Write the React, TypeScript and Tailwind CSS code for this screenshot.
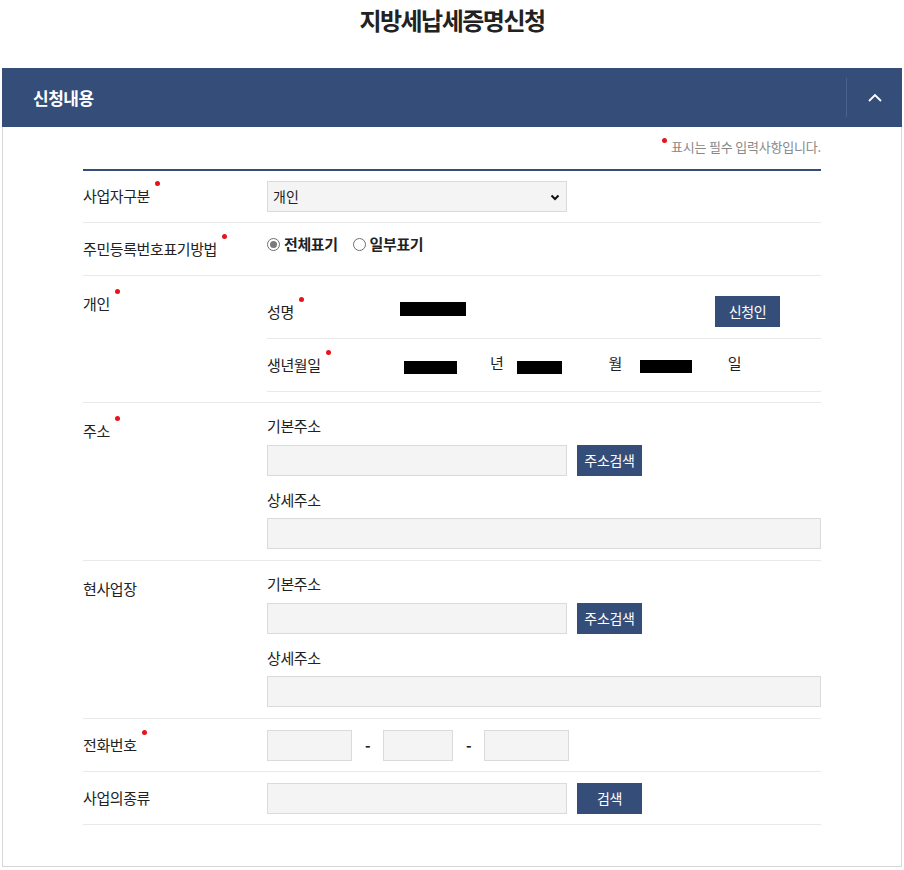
import React from 'react';

const NAVY = 'bg-[#344d79]';

function Req({ children }: { children: React.ReactNode }) {
  return (
    <span className="relative inline-block">
      {children}
      <span className="absolute -right-[10px] -top-[4px] w-[5px] h-[5px] rounded-full bg-[#e8141c]"></span>
    </span>
  );
}

function Box({ className = '' }: { className?: string }) {
  return <div className={`h-[31px] bg-[#f4f4f4] border border-[#dadada] ${className}`}></div>;
}

function NavyButton({ label, className = '' }: { label: string; className?: string }) {
  return (
    <button className={`h-[31px] w-[65px] ${NAVY} text-white text-[14px] tracking-[-0.3px] ${className}`}>
      {label}
    </button>
  );
}

function Radio({ label, checked }: { label: string; checked?: boolean }) {
  return (
    <label className="flex items-center gap-[4px]">
      <span className="w-[13px] h-[13px] rounded-full border border-[#6f6f6f] bg-white flex items-center justify-center">
        {checked && <span className="w-[7px] h-[7px] rounded-full bg-[#7a7a7a]"></span>}
      </span>
      <span className="font-semibold">{label}</span>
    </label>
  );
}

function AddressBlock() {
  return (
    <div className="flex-1 flex flex-col pt-[14px] pb-[11px]">
      <div className="leading-[18px]">기본주소</div>
      <div className="flex gap-[10px] mt-[10px]">
        <Box className="w-[300px]" />
        <NavyButton label="주소검색" />
      </div>
      <div className="leading-[18px] mt-[15px]">상세주소</div>
      <Box className="w-full mt-[9px]" />
    </div>
  );
}

export default function App() {
  return (
    <div className="min-h-[870px] bg-white text-[#222] font-['Noto_Sans_CJK_KR','Noto_Sans',sans-serif]">
      {/* Title */}
      <h1 className="pt-[4px] h-[68px] text-center text-[24px] leading-[32px] font-bold tracking-[-1.5px]">
        지방세납세증명신청
      </h1>

      <div className="mx-[2px] border-x border-b border-[#d6d6d6]">
        {/* Section header */}
        <div className={`-mx-px h-[59px] ${NAVY} flex items-center`}>
          <h2 className="flex-1 pl-[31px] text-white text-[17px] font-bold tracking-[-0.5px]">신청내용</h2>
          <div className="h-[39px] w-px bg-[#4b6291]"></div>
          <button className="w-[55px] h-full flex items-center justify-center">
            <svg width="14" height="9" viewBox="0 0 14 9" fill="none">
              <path d="M1 8 L7 2 L13 8" stroke="white" strokeWidth="1.8" />
            </svg>
          </button>
        </div>

        <div className="px-[80px] pb-[41px] text-[15px] tracking-[-0.4px]">
          <div className="pt-[10px] pb-[12px] flex justify-end text-[13px] leading-[20px] tracking-[-0.2px] text-[#888]">
            <span className="relative">
              <span className="absolute -left-[9px] top-[1px] w-[5px] h-[5px] rounded-full bg-[#e8141c]"></span>
              표시는 필수 입력사항입니다.
            </span>
          </div>

          <div className="border-t-2 border-[#344d79]">
            {/* 사업자구분 */}
            <div className="flex items-center h-[52px] border-b border-[#e9e9e9]">
              <div className="w-[184px]">
                <Req>사업자구분</Req>
              </div>
              <div className="relative w-[300px] h-[31px] bg-[#f4f4f4] border border-[#dadada] flex items-center px-[5px] text-[14px] tracking-normal">
                개인
                <svg className="absolute right-[6px] top-[12px]" width="10" height="7" viewBox="0 0 10 7" fill="none">
                  <path d="M1.5 1.5 L5 5 L8.5 1.5" stroke="#111" strokeWidth="2" />
                </svg>
              </div>
            </div>

            {/* 주민등록번호표기방법 */}
            <div className="flex items-center h-[53px] border-b border-[#e9e9e9]">
              <div className="w-[184px]">
                <Req>주민등록번호표기방법</Req>
              </div>
              <div className="flex items-center gap-[15px] -mt-[10px]">
                <Radio label="전체표기" checked />
                <Radio label="일부표기" />
              </div>
            </div>

            {/* 개인 */}
            <div className="flex py-[10px] border-b border-[#e9e9e9]">
              <div className="w-[184px] pt-[7px] leading-[22px]">
                <Req>개인</Req>
              </div>
              <div className="flex-1">
                <div className="flex items-center h-[53px] border-b border-[#e9e9e9]">
                  <div className="w-[133px]">
                    <Req>성명</Req>
                  </div>
                  <div className="w-[66px] h-[14px] bg-black -mt-[6px]"></div>
                  <div className="flex-1"></div>
                  <NavyButton label="신청인" className="mr-[41px] -mt-[2px]" />
                </div>
                <div className="flex items-center h-[53px] border-b border-[#e9e9e9]">
                  <div className="w-[137px]">
                    <Req>생년월일</Req>
                  </div>
                  <div className="w-[53px] h-[13px] bg-black mt-[4px]"></div>
                  <span className="ml-[33px] -mt-[4px]">년</span>
                  <div className="ml-[14px] w-[45px] h-[13px] bg-black mt-[4px]"></div>
                  <span className="ml-[46px] -mt-[4px]">월</span>
                  <div className="ml-[18px] w-[52px] h-[13px] bg-black mt-[2px]"></div>
                  <span className="ml-[36px] -mt-[4px]">일</span>
                </div>
              </div>
            </div>

            {/* 주소 */}
            <div className="flex border-b border-[#e9e9e9]">
              <div className="w-[184px] pt-[17px] leading-[22px]">
                <Req>주소</Req>
              </div>
              <AddressBlock />
            </div>

            {/* 현사업장 */}
            <div className="flex border-b border-[#e9e9e9]">
              <div className="w-[184px] pt-[17px] leading-[22px]">현사업장</div>
              <AddressBlock />
            </div>

            {/* 전화번호 */}
            <div className="flex items-center h-[53px] border-b border-[#e9e9e9]">
              <div className="w-[184px]">
                <Req>전화번호</Req>
              </div>
              <Box className="w-[85px]" />
              <span className="w-[31px] text-center font-bold">-</span>
              <Box className="w-[70px]" />
              <span className="w-[31px] text-center font-bold">-</span>
              <Box className="w-[85px]" />
            </div>

            {/* 사업의종류 */}
            <div className="flex items-center h-[53px] border-b border-[#e9e9e9]">
              <div className="w-[184px]">사업의종류</div>
              <Box className="w-[300px]" />
              <NavyButton label="검색" className="ml-[10px]" />
            </div>
          </div>
        </div>
      </div>
    </div>
  );
}
